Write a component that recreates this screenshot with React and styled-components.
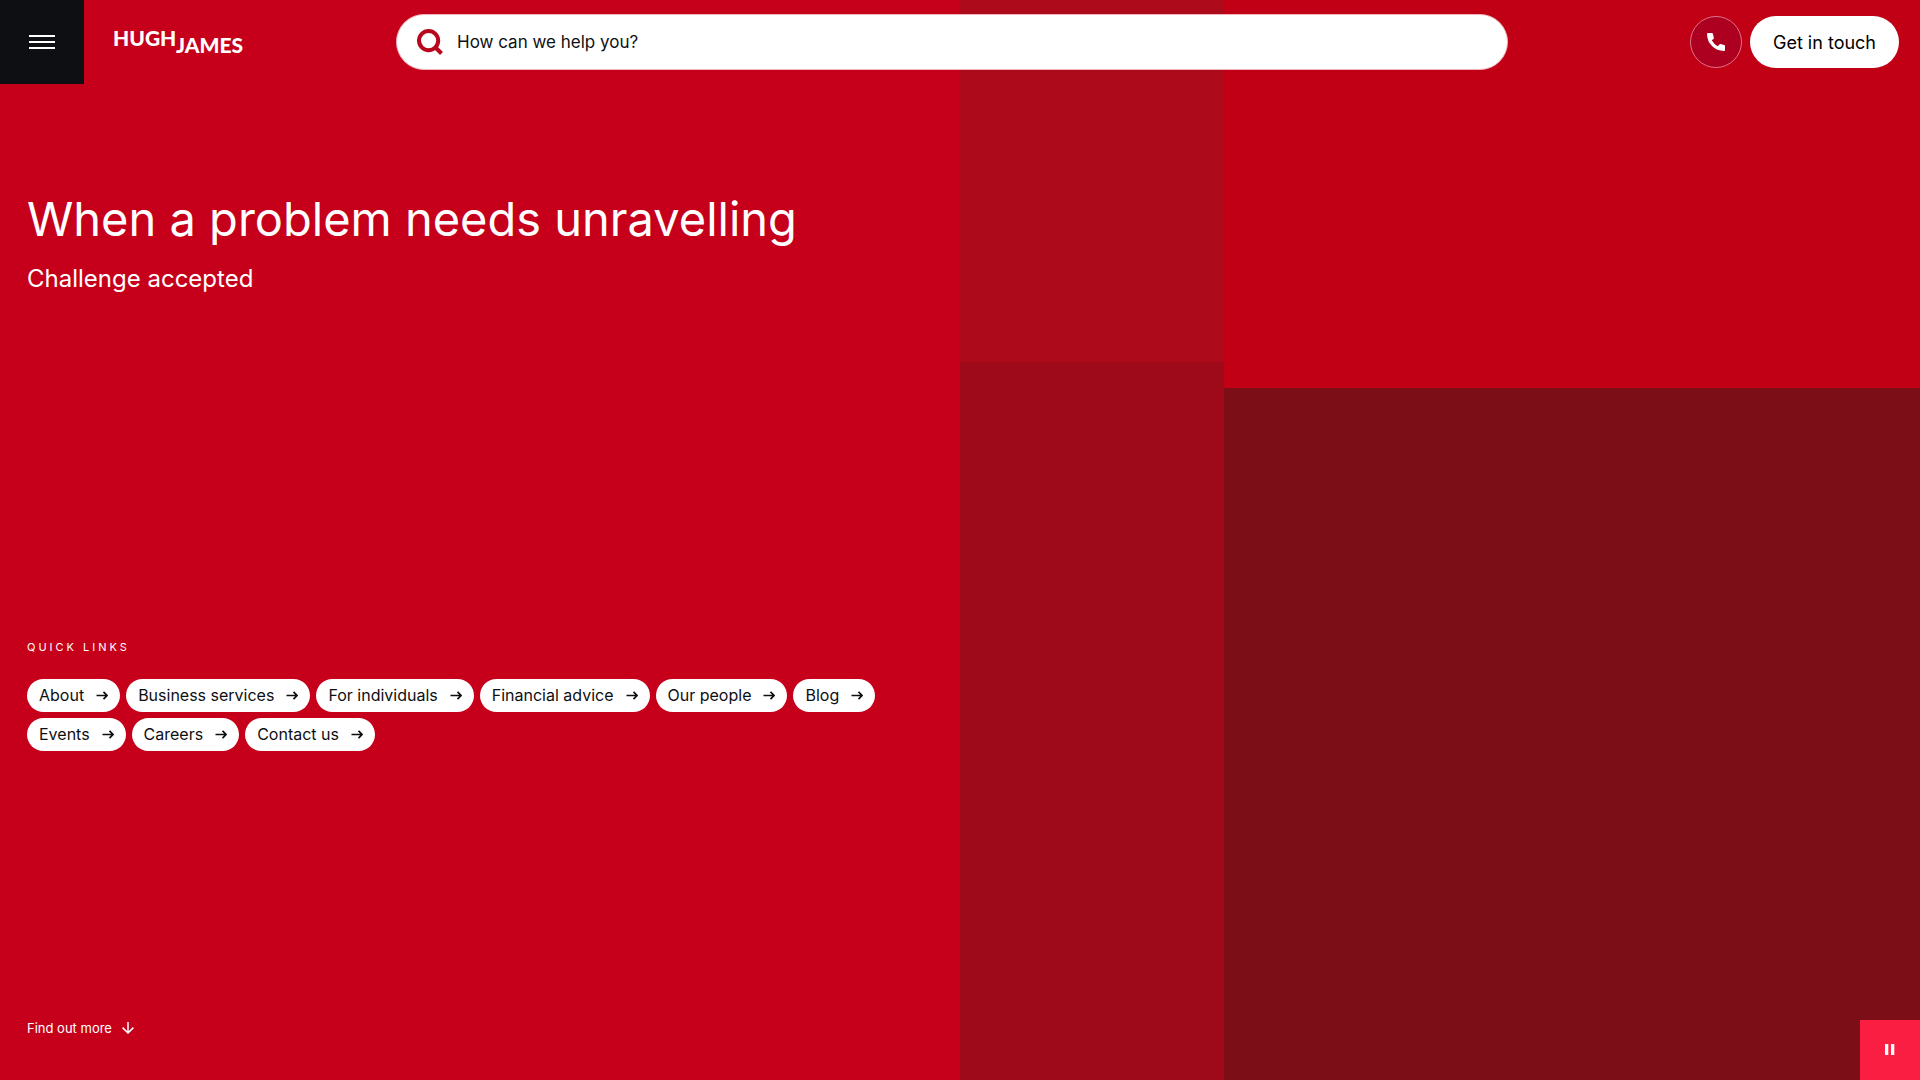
import React, { useState } from 'react'
import styled, { createGlobalStyle } from 'styled-components'

const links = [
  'About',
  'Business services',
  'For individuals',
  'Financial advice',
  'Our people',
  'Blog',
  'Events',
  'Careers',
  'Contact us',
]

const GlobalStyle = createGlobalStyle`
  * {
    box-sizing: border-box;
  }

  body {
    margin: 0;
    font-family: Inter, 'Liberation Sans', sans-serif;
    color: #fff;
    background: #c6001b;
  }

  button, input {
    font: inherit;
  }
`

const Page = styled.div`
  display: grid;
  min-height: 100vh;
`

const Layer = styled.div`
  grid-area: 1 / 1;
`

const Backdrop = styled(Layer)`
  display: grid;
  grid-template-columns: 50% 55fr 145fr;
`

const BackdropColumn = styled.div`
  display: grid;
  grid-template-rows: ${props => props.$rows};
`

const Block = styled.div`
  background: ${props => props.$color};
`

const Foreground = styled(Layer)`
  display: flex;
  flex-direction: column;
`

const Header = styled.header`
  display: grid;
  grid-template-columns: 396px 1fr 412px;
  align-items: center;
  height: 84px;
`

const Brand = styled.div`
  display: flex;
  align-items: center;
  gap: 28px;
`

const MenuButton = styled.button`
  display: flex;
  flex-direction: column;
  align-items: center;
  justify-content: center;
  gap: 4px;
  width: 84px;
  height: 84px;
  padding: 0;
  border: 0;
  background: #0e0f12;
  cursor: pointer;
`

const MenuLine = styled.span`
  width: 26px;
  height: 2px;
  background: #fff;
`

const LogoLink = styled.a`
  display: flex;
`

const SearchBar = styled.form`
  display: flex;
  align-items: center;
  gap: 14px;
  height: 56px;
  padding: 0 20px;
  border: 1px solid #efb4bb;
  border-radius: 28px;
  background: #fff;
`

const SearchButton = styled.button`
  display: flex;
  padding: 0;
  border: 0;
  background: none;
  cursor: pointer;
`

const SearchInput = styled.input`
  flex: 1;
  min-width: 0;
  padding: 0;
  border: 0;
  outline: 0;
  background: none;
  color: #0e0f12;
  font-size: 17px;

  &::placeholder {
    color: #0e0f12;
    opacity: 1;
  }
`

const Actions = styled.div`
  display: flex;
  justify-content: flex-end;
  gap: 8px;
  padding-right: 21px;
`

const PhoneLink = styled.a`
  display: flex;
  align-items: center;
  justify-content: center;
  width: 52px;
  height: 52px;
  border: 1px solid #df7386;
  border-radius: 50%;
  background: #ad0020;
`

const ContactLink = styled.a`
  display: flex;
  align-items: center;
  justify-content: center;
  width: 149px;
  height: 52px;
  border-radius: 26px;
  background: #fff;
  color: #000;
  font-size: 18px;
  text-decoration: none;
`

const Hero = styled.main`
  display: flex;
  flex: 1;
  flex-direction: column;
  width: 50%;
  padding: 105px 27px 40px;
`

const Title = styled.h1`
  margin: 0;
  font-size: 47px;
  font-weight: 400;
  line-height: 60px;
`

const Subtitle = styled.p`
  margin: 14px 0 0;
  font-size: 24px;
  line-height: 32px;
`

const QuickLinks = styled.nav`
  margin: auto 0;
  padding-top: 78px;
`

const QuickTitle = styled.h2`
  margin: 0 0 24px;
  font-size: 11px;
  font-weight: 400;
  line-height: 16px;
  letter-spacing: 3px;
  text-transform: uppercase;
`

const PillList = styled.ul`
  display: flex;
  flex-wrap: wrap;
  gap: 6px;
  margin: 0;
  padding: 0;
  list-style: none;
`

const Pill = styled.a`
  display: flex;
  align-items: center;
  gap: 12px;
  height: 33px;
  padding: 0 12px;
  border-radius: 17px;
  background: #fff;
  color: #0e0f12;
  font-size: 16px;
  text-decoration: none;
`

const MoreLink = styled.a`
  display: flex;
  align-items: center;
  align-self: flex-start;
  gap: 10px;
  color: #fff;
  font-size: 13px;
  line-height: 24px;
  text-decoration: none;
`

const PauseButton = styled.button`
  position: fixed;
  right: 0;
  bottom: 0;
  display: flex;
  align-items: center;
  justify-content: center;
  width: 60px;
  height: 60px;
  padding: 0;
  border: 0;
  background: #fa1e43;
  cursor: pointer;
`

function Logo() {
  return (
    <svg width="140" height="32" viewBox="0 0 140 32" fill="#fff" fontFamily="Lato, sans-serif" fontSize="21" fontWeight="900" aria-hidden="true">
      <text x="1" y="20">HUGH</text>
      <text x="64" y="27">JAMES</text>
    </svg>
  )
}

function SearchIcon() {
  return (
    <svg width="26" height="26" viewBox="0 0 26 26" fill="none" stroke="#b8071c" strokeWidth="4" aria-hidden="true">
      <circle cx="11.6" cy="11.6" r="9.6" />
      <path d="M18 18l6.500 6.500" />
    </svg>
  )
}

function PhoneIcon() {
  return (
    <svg width="18" height="18" viewBox="0 0 18 18" fill="#fff" aria-hidden="true">
      <path d="M1 0h3.900q.8 0 1 .8l.9 3.900q.2.700-.3 1.200L4.700 7.200q2.100 3.800 6 6l1.700-1.800q.5-.5 1.200-.3l3.600.9q.8.200.8 1v3.900q0 1-1 1Q9.800 17.900 5 13 .1 8.200 0 1q0-1 1-1z" />
    </svg>
  )
}

function ArrowRight() {
  return (
    <svg width="12" height="10" viewBox="0 0 12 10" fill="none" stroke="#0e0f12" strokeWidth="1.700" aria-hidden="true">
      <path d="M.5 5.500H11M7.500 1.800l3.500 3.700-3.500 3.700" />
    </svg>
  )
}

function ArrowDown() {
  return (
    <svg width="12" height="12" viewBox="0 0 12 12" fill="none" stroke="#fff" strokeWidth="1.5" aria-hidden="true">
      <path d="M6 0v11M.6 5.600L6 11l5.400-5.400" />
    </svg>
  )
}

export default function App() {
  const [paused, setPaused] = useState(false)

  return (
    <Page>
      <GlobalStyle />
      <Backdrop aria-hidden="true">
        <Block $color="#c6001b" />
        <BackdropColumn $rows="67fr 133fr">
          <Block $color="#ad0a1b" />
          <Block $color="#9f0a1a" />
        </BackdropColumn>
        <BackdropColumn $rows="97fr 173fr">
          <Block $color="#c10015" />
          <Block $color="#7c0e18" />
        </BackdropColumn>
      </Backdrop>

      <Foreground>
        <Header>
          <Brand>
            <MenuButton type="button" aria-label="Menu">
              <MenuLine />
              <MenuLine />
              <MenuLine />
            </MenuButton>
            <LogoLink href="#" aria-label="Hugh James">
              <Logo />
            </LogoLink>
          </Brand>
          <SearchBar role="search" onSubmit={e => e.preventDefault()}>
            <SearchButton type="submit" aria-label="Search">
              <SearchIcon />
            </SearchButton>
            <SearchInput type="text" name="search" aria-label="Search" placeholder="How can we help you?" />
          </SearchBar>
          <Actions>
            <PhoneLink href="#phone" aria-label="Call us">
              <PhoneIcon />
            </PhoneLink>
            <ContactLink href="#contact">Get in touch</ContactLink>
          </Actions>
        </Header>

        <Hero>
          <Title>When a problem needs unravelling</Title>
          <Subtitle>Challenge accepted</Subtitle>
          <QuickLinks aria-labelledby="quick-links">
            <QuickTitle id="quick-links">Quick links</QuickTitle>
            <PillList>
              {links.map(link => (
                <li key={link}>
                  <Pill href="#">
                    {link}
                    <ArrowRight />
                  </Pill>
                </li>
              ))}
            </PillList>
          </QuickLinks>
          <MoreLink href="#more">
            Find out more
            <ArrowDown />
          </MoreLink>
        </Hero>
      </Foreground>

      <PauseButton type="button" aria-label={paused ? 'Play' : 'Pause'} onClick={() => setPaused(!paused)}>
        <svg width="10" height="12" viewBox="0 0 10 12" fill="#fff" aria-hidden="true">
          {paused ? <path d="M1 0l9 5.500L1 11z" /> : <path d="M0 0h3.300v11H0zM6 0h3.300v11H6z" />}
        </svg>
      </PauseButton>
    </Page>
  )
}
